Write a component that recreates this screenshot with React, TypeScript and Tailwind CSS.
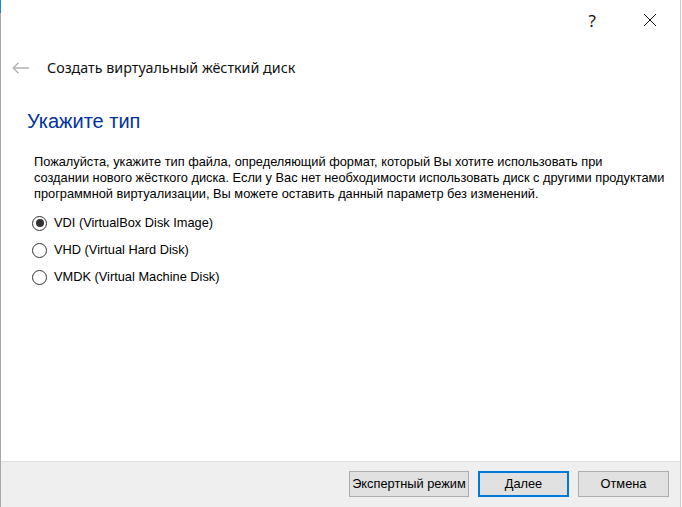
import React, { useState } from "react";

const formats = [
  { id: "vdi", label: "VDI (VirtualBox Disk Image)" },
  { id: "vhd", label: "VHD (Virtual Hard Disk)" },
  { id: "vmdk", label: "VMDK (Virtual Machine Disk)" },
];

const body = { fontFamily: "Tahoma, 'Liberation Sans', sans-serif" };
const ui = { fontFamily: "'Segoe UI', 'Noto Sans', sans-serif" };
const head = { fontFamily: "'Segoe UI', 'Liberation Sans', sans-serif" };

export default function App() {
  const [format, setFormat] = useState("vdi");

  return (
    <div className="w-[682px] h-[507px] bg-white flex overflow-hidden">
      {/* left window edge */}
      <div className="w-px flex flex-col bg-[#a9a9a9]">
        <div className="h-[13px] bg-[#1883d7]" />
      </div>

      <div className="w-[679px] flex flex-col">
        {/* title bar */}
        <div className="h-[40px] flex justify-end items-center pr-[22px] gap-[47px] text-[#111]" style={ui}>
          <span className="text-[17px] leading-none">?</span>
          <svg width="14" height="14" viewBox="0 0 14 14" className="mr-[1px]">
            <path d="M1 1 L13 13 M13 1 L1 13" stroke="#111" strokeWidth="1" />
          </svg>
        </div>

        {/* wizard header */}
        <div className="h-[54px] flex items-center pl-[11px] pt-[1px]">
          <svg width="18" height="12" viewBox="0 0 18 12">
            <path d="M1 6 H17 M6.5 0.7 L1.2 6 L6.5 11.3" stroke="#b4b4b4" strokeWidth="1.4" fill="none" />
          </svg>
          <span className="ml-[17px] text-[14.3px] text-[#111]" style={ui}>
            Создать виртуальный жёсткий диск
          </span>
        </div>

        <div className="mt-[12px] pl-[26px] h-[30px] flex items-center text-[20px] text-[#003399]" style={head}>
          Укажите тип
        </div>

        <p className="mt-[18px] pl-[33px] text-[12.8px] leading-[16px] text-black whitespace-nowrap" style={body}>
          Пожалуйста, укажите тип файла, определяющий формат, который Вы хотите использовать при
          <br />
          создании нового жёсткого диска. Если у Вас нет необходимости использовать диск с другими продуктами
          <br />
          программной виртуализации, Вы можете оставить данный параметр без изменений.
        </p>

        <div className="mt-[13px] pl-[31px] flex flex-col gap-[11px]" style={body}>
          {formats.map((f) => (
            <label key={f.id} className="h-[16px] flex items-center cursor-default" onClick={() => setFormat(f.id)}>
              <span className="w-[15px] h-[15px] rounded-full border border-[#333] flex items-center justify-center bg-white">
                {format === f.id && <span className="w-[8px] h-[8px] rounded-full bg-[#333]" />}
              </span>
              <span className="ml-[7px] text-[12.8px] text-black">{f.label}</span>
            </label>
          ))}
        </div>

        <div className="flex-1" />

        {/* footer */}
        <div className="h-[46px] border-t border-[#dfdfdf] bg-[#efefef] flex justify-end items-start pt-[9px] pr-[11px] gap-[9px]" style={body}>
          <button className="w-[120px] h-[26px] border border-[#adadad] bg-[#e1e1e1] text-[12.8px] text-black whitespace-nowrap">
            Экспертный режим
          </button>
          <button className="w-[91px] h-[26px] border-2 border-[#0078d7] bg-[#e1e1e1] text-[12.8px] text-black">
            Далее
          </button>
          <button className="w-[91px] h-[26px] border border-[#adadad] bg-[#e1e1e1] text-[12.8px] text-black">
            Отмена
          </button>
        </div>
      </div>

      {/* right window edge */}
      <div className="w-px bg-[#c8c8c8]" />
      <div className="w-px bg-white" />
    </div>
  );
}
